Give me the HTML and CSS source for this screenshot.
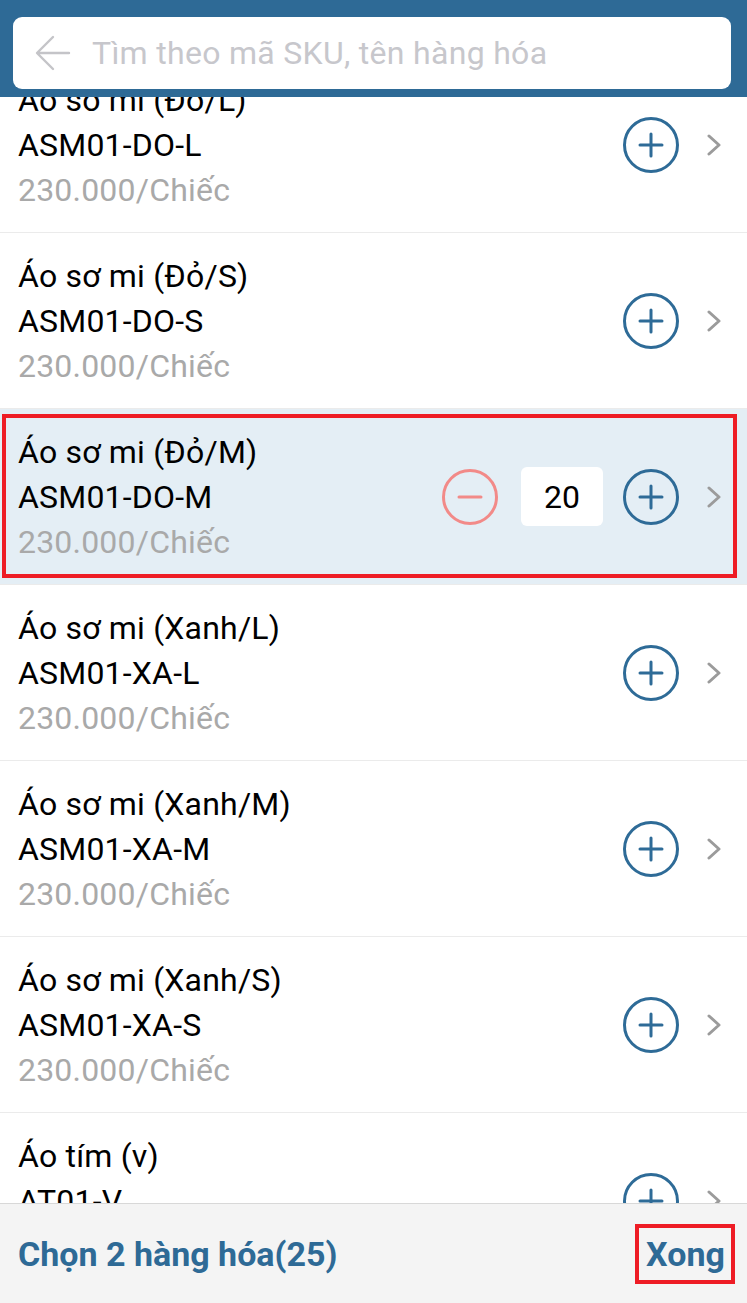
FILE: index.html
```html
<!DOCTYPE html>
<html lang="vi">
<head>
<meta charset="utf-8">
<link rel="stylesheet" href="styles.css">
</head>
<body>
<div class="screen">
  <header class="header">
    <div class="search">
      <svg class="back" width="36" height="36" viewBox="0 0 36 36"><path d="M34 18H3M18 2L2 18l16 16" fill="none" stroke="#c4c4c8" stroke-width="2.4" stroke-linecap="round" stroke-linejoin="round"/></svg>
      <span class="placeholder">Tìm theo mã SKU, tên hàng hóa</span>
    </div>
  </header>
  <main class="list">
    <div class="rows">
      <div class="row">
        <div class="info"><div class="title">Áo sơ mi (Đỏ/L)</div><div class="sku">ASM01-DO-L</div><div class="price">230.000/Chiếc</div></div>
        <div class="ctrl">
          <svg class="btn" width="56" height="56" viewBox="0 0 56 56"><circle cx="28" cy="28" r="26.5" fill="none" stroke="#2e6b97" stroke-width="3"/><path d="M17 28h22M28 17v22" stroke="#2e6b97" stroke-width="3" stroke-linecap="round"/></svg>
          <svg class="chev" width="15" height="22" viewBox="0 0 15 22"><path d="M2 2l10 9-10 9" fill="none" stroke="#9b9b9b" stroke-width="3" stroke-linecap="round" stroke-linejoin="round"/></svg>
        </div>
      </div>
      <div class="row">
        <div class="info"><div class="title">Áo sơ mi (Đỏ/S)</div><div class="sku">ASM01-DO-S</div><div class="price">230.000/Chiếc</div></div>
        <div class="ctrl">
          <svg class="btn" width="56" height="56" viewBox="0 0 56 56"><circle cx="28" cy="28" r="26.5" fill="none" stroke="#2e6b97" stroke-width="3"/><path d="M17 28h22M28 17v22" stroke="#2e6b97" stroke-width="3" stroke-linecap="round"/></svg>
          <svg class="chev" width="15" height="22" viewBox="0 0 15 22"><path d="M2 2l10 9-10 9" fill="none" stroke="#9b9b9b" stroke-width="3" stroke-linecap="round" stroke-linejoin="round"/></svg>
        </div>
      </div>
      <div class="row selected">
        <div class="info"><div class="title">Áo sơ mi (Đỏ/M)</div><div class="sku">ASM01-DO-M</div><div class="price">230.000/Chiếc</div></div>
        <div class="ctrl">
          <svg class="btn minus" width="56" height="56" viewBox="0 0 56 56"><circle cx="28" cy="28" r="26.5" fill="none" stroke="#f28a88" stroke-width="3"/><path d="M17 28h22" stroke="#f28a88" stroke-width="3" stroke-linecap="round"/></svg>
          <div class="qty">20</div>
          <svg class="btn" width="56" height="56" viewBox="0 0 56 56"><circle cx="28" cy="28" r="26.5" fill="none" stroke="#2e6b97" stroke-width="3"/><path d="M17 28h22M28 17v22" stroke="#2e6b97" stroke-width="3" stroke-linecap="round"/></svg>
          <svg class="chev" width="15" height="22" viewBox="0 0 15 22"><path d="M2 2l10 9-10 9" fill="none" stroke="#9b9b9b" stroke-width="3" stroke-linecap="round" stroke-linejoin="round"/></svg>
        </div>
        <div class="mark"></div>
      </div>
      <div class="row">
        <div class="info"><div class="title">Áo sơ mi (Xanh/L)</div><div class="sku">ASM01-XA-L</div><div class="price">230.000/Chiếc</div></div>
        <div class="ctrl">
          <svg class="btn" width="56" height="56" viewBox="0 0 56 56"><circle cx="28" cy="28" r="26.5" fill="none" stroke="#2e6b97" stroke-width="3"/><path d="M17 28h22M28 17v22" stroke="#2e6b97" stroke-width="3" stroke-linecap="round"/></svg>
          <svg class="chev" width="15" height="22" viewBox="0 0 15 22"><path d="M2 2l10 9-10 9" fill="none" stroke="#9b9b9b" stroke-width="3" stroke-linecap="round" stroke-linejoin="round"/></svg>
        </div>
      </div>
      <div class="row">
        <div class="info"><div class="title">Áo sơ mi (Xanh/M)</div><div class="sku">ASM01-XA-M</div><div class="price">230.000/Chiếc</div></div>
        <div class="ctrl">
          <svg class="btn" width="56" height="56" viewBox="0 0 56 56"><circle cx="28" cy="28" r="26.5" fill="none" stroke="#2e6b97" stroke-width="3"/><path d="M17 28h22M28 17v22" stroke="#2e6b97" stroke-width="3" stroke-linecap="round"/></svg>
          <svg class="chev" width="15" height="22" viewBox="0 0 15 22"><path d="M2 2l10 9-10 9" fill="none" stroke="#9b9b9b" stroke-width="3" stroke-linecap="round" stroke-linejoin="round"/></svg>
        </div>
      </div>
      <div class="row">
        <div class="info"><div class="title">Áo sơ mi (Xanh/S)</div><div class="sku">ASM01-XA-S</div><div class="price">230.000/Chiếc</div></div>
        <div class="ctrl">
          <svg class="btn" width="56" height="56" viewBox="0 0 56 56"><circle cx="28" cy="28" r="26.5" fill="none" stroke="#2e6b97" stroke-width="3"/><path d="M17 28h22M28 17v22" stroke="#2e6b97" stroke-width="3" stroke-linecap="round"/></svg>
          <svg class="chev" width="15" height="22" viewBox="0 0 15 22"><path d="M2 2l10 9-10 9" fill="none" stroke="#9b9b9b" stroke-width="3" stroke-linecap="round" stroke-linejoin="round"/></svg>
        </div>
      </div>
      <div class="row">
        <div class="info"><div class="title">Áo tím (v)</div><div class="sku">AT01-V</div><div class="price">230.000/Chiếc</div></div>
        <div class="ctrl">
          <svg class="btn" width="56" height="56" viewBox="0 0 56 56"><circle cx="28" cy="28" r="26.5" fill="none" stroke="#2e6b97" stroke-width="3"/><path d="M17 28h22M28 17v22" stroke="#2e6b97" stroke-width="3" stroke-linecap="round"/></svg>
          <svg class="chev" width="15" height="22" viewBox="0 0 15 22"><path d="M2 2l10 9-10 9" fill="none" stroke="#9b9b9b" stroke-width="3" stroke-linecap="round" stroke-linejoin="round"/></svg>
        </div>
      </div>
    </div>
  </main>
  <footer class="footer">
    <span class="count">Chọn 2 hàng hóa(25)</span>
    <span class="done">Xong</span>
  </footer>
</div>
</body>
</html>
```
FILE: styles.css
```css
* { box-sizing: border-box; }
html, body { margin: 0; padding: 0; }
body {
  font-family: Roboto, "Noto Sans", "Liberation Sans", sans-serif;
  background: #fff;
}
.screen {
  width: 747px;
  height: 1303px;
  display: flex;
  flex-direction: column;
  overflow: hidden;
}
.header {
  background: #2e6a96;
  padding: 17px 16px 8px 13px;
  position: relative;
  z-index: 2;
}
.search {
  height: 72px;
  background: #fff;
  border-radius: 9px;
  display: flex;
  align-items: center;
  padding-left: 22px;
  gap: 21px;
}
.placeholder {
  font-size: 32px;
  letter-spacing: 0.3px;
  color: #c7c7cc;
}
.list {
  flex: 1;
  overflow: hidden;
}
.rows {
  margin-top: -40px;
}
.row {
  position: relative;
  height: 176px;
  display: flex;
  align-items: center;
  padding: 0 25px 0 18px;
  border-bottom: 1px solid #ebebeb;
}
.row.selected {
  background: #e4eef5;
}
.info {
  flex: 1;
  font-size: 32px;
  letter-spacing: 0.2px;
  line-height: 45px;
  padding-top: 1px;
}
.title, .sku { color: #000; }
.price { color: #a9a9a9; }
.ctrl {
  display: flex;
  align-items: center;
}
.btn { display: block; }
.minus { margin-right: 23px; }
.qty {
  width: 82px;
  height: 59px;
  background: #fff;
  border-radius: 6px;
  display: flex;
  align-items: center;
  justify-content: center;
  font-size: 32px;
  color: #000;
  margin-right: 20px;
}
.chev {
  display: block;
  margin-left: 28px;
}
.mark {
  position: absolute;
  left: 2px;
  top: 5px;
  right: 10px;
  bottom: 6px;
  border: 4px solid #ee1c25;
}
.footer {
  height: 100px;
  flex: none;
  background: #f4f4f4;
  border-top: 1px solid #d8d8d8;
  display: flex;
  align-items: center;
  justify-content: space-between;
  padding: 0 12px 0 18px;
  position: relative;
  z-index: 2;
}
.count {
  font-size: 34px;
  font-weight: 700;
  color: #2e6a96;
}
.done {
  font-size: 34px;
  font-weight: 700;
  color: #2e6a96;
  border: 4px solid #ee1c25;
  padding: 6px 6px 6px 7px;
  line-height: 40px;
}
```
